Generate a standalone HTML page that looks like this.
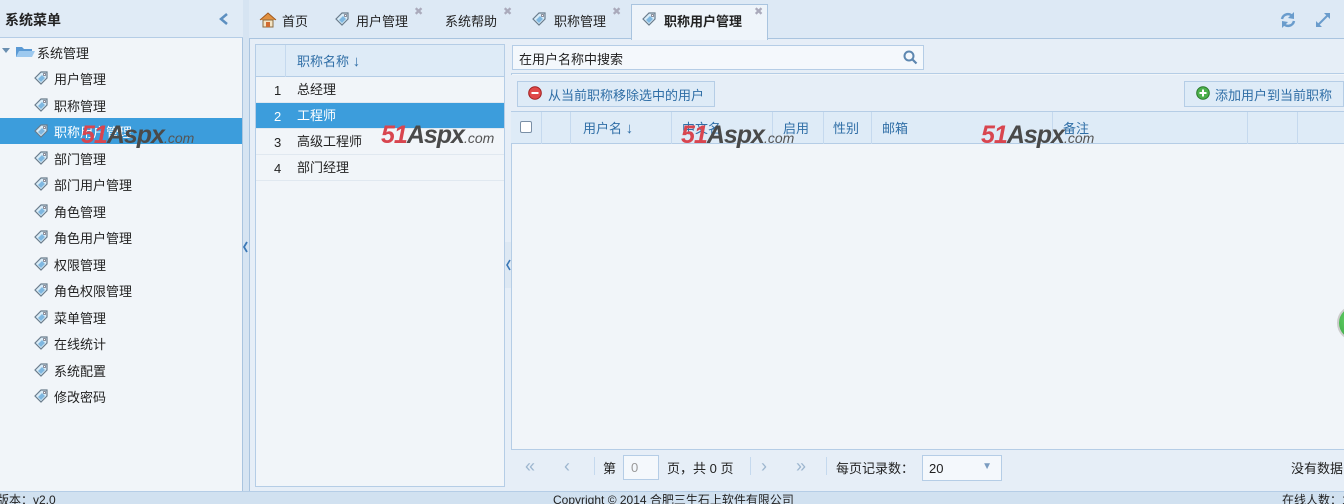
<!DOCTYPE html>
<html><head><meta charset="utf-8"><style>
*{margin:0;padding:0;box-sizing:border-box}
html,body{width:1344px;height:504px;overflow:hidden}
body{background:#d6e4f2;font-family:"Liberation Sans","Noto Sans CJK SC",sans-serif;font-size:13px;color:#222;position:relative}
.a{position:absolute;white-space:nowrap}
.tag{display:inline-block;width:16px;height:14px;vertical-align:middle}
.wm{position:absolute;font-style:italic;font-weight:bold;font-family:"Liberation Sans",sans-serif;font-size:25px;letter-spacing:-1px;white-space:nowrap}
.wm .r{color:#d8454f}.wm .g{color:#4a4a4a}.wm .c{font-size:14px;color:#555;font-weight:normal;letter-spacing:0}
.row{position:absolute;left:0;width:248px;height:26px;border-bottom:1px solid #e0e8f0;line-height:26px}
.hd{color:#2f6ea6}
.vl{position:absolute;top:0;height:32px;border-left:1px solid #c5d9ee}
</style></head><body>
<svg width="0" height="0" style="position:absolute"><defs><g id="tg"><path d="M2 7 L8 1 L14 1 L14 7 L8 13 Z" fill="#d8ecf8" stroke="#6a7c8c" stroke-width="1.2"/><path d="M5 8 L9 4 L12 7 L8 11Z" fill="#7fb7e0"/><circle cx="11.5" cy="3.5" r="1.2" fill="#fff" stroke="#556" stroke-width=".6"/></g></defs></svg>

<div class="a" style="left:0;top:0;width:243px;height:492px;background:#f1f5f9;border-right:1px solid #a9c4df"></div>
<div class="a" style="left:0;top:0;width:243px;height:38px;background:#e0ebf6;border-bottom:1px solid #b5cde6"></div>
<div class="a" style="left:5px;top:10px;font-weight:bold;font-size:14px">系统菜单</div>
<svg class="a" style="left:218px;top:12px" width="12" height="14"><path d="M9 2 L3 7 L9 12" stroke="#5c8fc0" stroke-width="2.5" fill="none"/></svg>
<svg class="a" style="left:2px;top:46px" width="34" height="12"><path d="M0 2 L8 2 L4 7Z" fill="#6a8fb0"/><path d="M14 1 L20 1 L22 3 L30 3 L30 11 L14 11Z" fill="#5b9ad4"/><path d="M17 5 L33 5 L30 11 L14 11Z" fill="#9dc9ef"/></svg>
<div class="a" style="left:37px;top:43px">系统管理</div>
<div class="a" style="left:0;top:118px;width:242px;height:26px;background:#3c9ddc"></div>
<div id="menu"></div>
<div class="a" style="left:242px;top:236px;width:7px;height:22px"><svg width="7" height="22"><path d="M5 6 L2 11 L5 16" stroke="#3b78b6" stroke-width="1.8" fill="none"/></svg></div>

<div class="a" style="left:249px;top:0;width:1095px;height:492px;background:#e6eef7;border-left:1px solid #a9c4df"></div>
<div class="a" style="left:249px;top:0;width:1095px;height:39px;background:#dde9f5;border-bottom:1px solid #a9c4df"></div>
<div class="a" style="left:631px;top:4px;width:137px;height:36px;background:#eef4fa;border:1px solid #a9c4df;border-bottom:none"></div>
<svg class="a" style="left:259px;top:12px" width="18" height="16"><path d="M1 8 L9 1 L17 8" fill="#e09040" stroke="#a05a20"/><rect x="4" y="8" width="10" height="7" fill="#f4e4c4" stroke="#8a6a40"/><rect x="7" y="10" width="4" height="5" fill="#d06a30"/></svg>
<div class="a" style="left:282px;top:11px">首页</div>
<svg class="a tag" style="left:334px;top:12px"><use href="#tg"/></svg><div class="a" style="left:356px;top:11px">用户管理</div><div class="a" style="left:414px;top:5px;color:#aab;font-size:11px">✖</div>
<div class="a" style="left:445px;top:11px">系统帮助</div><div class="a" style="left:503px;top:5px;color:#aab;font-size:11px">✖</div>
<svg class="a tag" style="left:531px;top:12px"><use href="#tg"/></svg><div class="a" style="left:554px;top:11px">职称管理</div><div class="a" style="left:612px;top:5px;color:#aab;font-size:11px">✖</div>
<svg class="a tag" style="left:641px;top:12px"><use href="#tg"/></svg><div class="a" style="left:664px;top:11px;font-weight:bold">职称用户管理</div><div class="a" style="left:754px;top:5px;color:#aab;font-size:11px">✖</div>
<svg class="a" style="left:1279px;top:11px" width="18" height="18"><path d="M3 8 A6 6 0 0 1 14 6" stroke="#6a9ccc" stroke-width="2.5" fill="none"/><path d="M15 1 L15 8 L9 7Z" fill="#6a9ccc"/><path d="M15 10 A6 6 0 0 1 4 12" stroke="#6a9ccc" stroke-width="2.5" fill="none"/><path d="M3 17 L3 10 L9 11Z" fill="#6a9ccc"/></svg>
<svg class="a" style="left:1314px;top:11px" width="18" height="18"><path d="M3 15 L15 3" stroke="#6a9ccc" stroke-width="2"/><path d="M10 2 L16 2 L16 8Z M2 10 L2 16 L8 16Z" fill="#6a9ccc"/></svg>

<div class="a" style="left:255px;top:44px;width:250px;height:443px;background:#f1f5f9;border:1px solid #b5cde6">
 <div class="a" style="left:0;top:0;width:248px;height:32px;background:#deebf7;border-bottom:1px solid #b5cde6"></div>
 <div class="a" style="left:29px;top:0;height:32px;border-left:1px solid #c5d9ee"></div>
 <div class="a hd" style="left:41px;top:6px">职称名称 <b style="font-size:15px">↓</b></div>
 <div class="row" style="top:32px"><span style="position:absolute;left:18px;top:1px">1</span><span style="position:absolute;left:41px">总经理</span></div>
 <div class="row" style="top:58px;background:#3c9ddc;color:#fff"><span style="position:absolute;left:18px;top:1px">2</span><span style="position:absolute;left:41px">工程师</span></div>
 <div class="row" style="top:84px"><span style="position:absolute;left:18px;top:1px">3</span><span style="position:absolute;left:41px">高级工程师</span></div>
 <div class="row" style="top:110px"><span style="position:absolute;left:18px;top:1px">4</span><span style="position:absolute;left:41px">部门经理</span></div>
</div>
<div class="a" style="left:505px;top:242px;width:6px;height:46px;background:#dde8f3"><svg width="6" height="46"><path d="M5 18 L2 23 L5 28" stroke="#3b78b6" stroke-width="1.6" fill="none"/></svg></div>

<div class="a" style="left:511px;top:44px;width:833px;height:443px;background:#f1f5f9;border:1px solid #b5cde6;border-right:none"></div>
<div class="a" style="left:511px;top:44px;width:833px;height:30px;background:#e6eef7;border-bottom:1px solid #b5cde6"></div>
<div class="a" style="left:512px;top:45px;width:412px;height:25px;background:#f4f8fc;border:1px solid #b5cde6"></div>
<div class="a" style="left:519px;top:49px">在用户名称中搜索</div>
<svg class="a" style="left:903px;top:50px" width="15" height="15"><circle cx="6" cy="6" r="4.5" stroke="#5d87b0" stroke-width="2" fill="none"/><path d="M9.5 9.5 L13.5 13.5" stroke="#5d87b0" stroke-width="2.2"/></svg>
<div class="a" style="left:511px;top:75px;width:833px;height:37px;background:#e6eef7;border-bottom:1px solid #b5cde6"></div>
<div class="a" style="left:517px;top:81px;width:198px;height:26px;background:#deebf7;border:1px solid #b5cde6"></div>
<svg class="a" style="left:528px;top:86px" width="14" height="14"><circle cx="7" cy="7" r="6.3" fill="#e04848" stroke="#a02020"/><rect x="3.5" y="6" width="7" height="2" fill="#fff"/></svg>
<div class="a hd" style="left:548px;top:85px">从当前职称移除选中的用户</div>
<div class="a" style="left:1184px;top:81px;width:160px;height:26px;background:#deebf7;border:1px solid #b5cde6"></div>
<svg class="a" style="left:1196px;top:86px" width="14" height="14"><circle cx="7" cy="7" r="6.3" fill="#4cb04c" stroke="#2a7a2a"/><path d="M3.5 7 H10.5 M7 3.5 V10.5" stroke="#fff" stroke-width="2"/></svg>
<div class="a hd" style="left:1215px;top:85px">添加用户到当前职称</div>
<div class="a" style="left:511px;top:112px;width:833px;height:32px;background:#deebf7;border-bottom:1px solid #b5cde6">
 <div style="position:absolute;left:9px;top:9px;width:12px;height:12px;border:1px solid #7a8fa6;border-radius:2px;background:#fff"></div>
 <div class="vl" style="left:30px"></div><div class="vl" style="left:59px"></div><div class="vl" style="left:160px"></div><div class="vl" style="left:261px"></div><div class="vl" style="left:312px"></div><div class="vl" style="left:360px"></div><div class="vl" style="left:541px"></div><div class="vl" style="left:736px"></div><div class="vl" style="left:786px"></div>
 <span class="hd" style="position:absolute;left:72px;top:6px">用户名 <b style="font-size:15px">↓</b></span>
 <span class="hd" style="position:absolute;left:171px;top:6px">中文名</span>
 <span class="hd" style="position:absolute;left:272px;top:6px">启用</span>
 <span class="hd" style="position:absolute;left:322px;top:6px">性别</span>
 <span class="hd" style="position:absolute;left:371px;top:6px">邮箱</span>
 <span class="hd" style="position:absolute;left:552px;top:6px">备注</span>
</div>
<div class="a" style="left:511px;top:449px;width:833px;height:38px;background:#e6eef7;border-top:1px solid #b5cde6"></div>
<div class="a" style="left:525px;top:456px;color:#9db6cf;font-size:18px">«</div>
<div class="a" style="left:564px;top:456px;color:#9db6cf;font-size:18px">‹</div>
<div class="a" style="left:594px;top:457px;height:18px;border-left:1px solid #c5d9ee"></div>
<div class="a" style="left:603px;top:458px">第</div>
<div class="a" style="left:623px;top:455px;width:36px;height:25px;background:#f4f8fc;border:1px solid #b5cde6;color:#999;padding:4px 0 0 7px">0</div>
<div class="a" style="left:667px;top:458px">页，共 0 页</div>
<div class="a" style="left:750px;top:457px;height:18px;border-left:1px solid #c5d9ee"></div>
<div class="a" style="left:761px;top:456px;color:#9db6cf;font-size:18px">›</div>
<div class="a" style="left:796px;top:456px;color:#9db6cf;font-size:18px">»</div>
<div class="a" style="left:826px;top:457px;height:18px;border-left:1px solid #c5d9ee"></div>
<div class="a" style="left:836px;top:458px">每页记录数：</div>
<div class="a" style="left:922px;top:455px;width:80px;height:26px;background:#f4f8fc;border:1px solid #b5cde6;padding:5px 0 0 6px">20<span style="position:absolute;right:9px;top:5px;color:#7a9cc0;font-size:10px">▼</span></div>
<div class="a" style="left:1291px;top:458px">没有数据</div>
<div class="a" style="left:1337px;top:305px;width:36px;height:36px;border-radius:50%;background:radial-gradient(circle at 40% 40%,#6cd86c,#2a9a3a);border:2px solid #ccc"></div>
<div class="a" style="left:0;top:491px;width:1344px;height:13px;background:#d1e1f0;border-top:1px solid #b5cde6;font-size:12px;line-height:14px;overflow:hidden">
 <span style="position:absolute;left:-3px;top:1px;white-space:nowrap">版本：v2.0</span>
 <span style="position:absolute;left:553px;top:1px;white-space:nowrap">Copyright © 2014 合肥三生石上软件有限公司</span>
 <span style="position:absolute;left:1282px;top:1px;white-space:nowrap">在线人数：1</span>
</div>
<div class="wm" style="left:81px;top:121px"><span class="r">51</span><span class="g">Aspx</span><span class="c">.com</span></div>
<div class="wm" style="left:381px;top:121px"><span class="r">51</span><span class="g">Aspx</span><span class="c">.com</span></div>
<div class="wm" style="left:681px;top:121px"><span class="r">51</span><span class="g">Aspx</span><span class="c">.com</span></div>
<div class="wm" style="left:981px;top:121px"><span class="r">51</span><span class="g">Aspx</span><span class="c">.com</span></div>
<script>
var items=["用户管理","职称管理","职称用户管理","部门管理","部门用户管理","角色管理","角色用户管理","权限管理","角色权限管理","菜单管理","在线统计","系统配置","修改密码"];
var h="";items.forEach(function(t,i){var y=70+i*26.5;var c=i==2?"#fff":"#222";
h+='<svg class="a tag" style="left:33px;top:'+(y+1)+'px"><use href="#tg"/></svg><div class="a" style="left:54px;top:'+(y-1)+'px;color:'+c+'">'+t+'</div>';});
document.getElementById("menu").innerHTML=h;
</script>
</body></html>
